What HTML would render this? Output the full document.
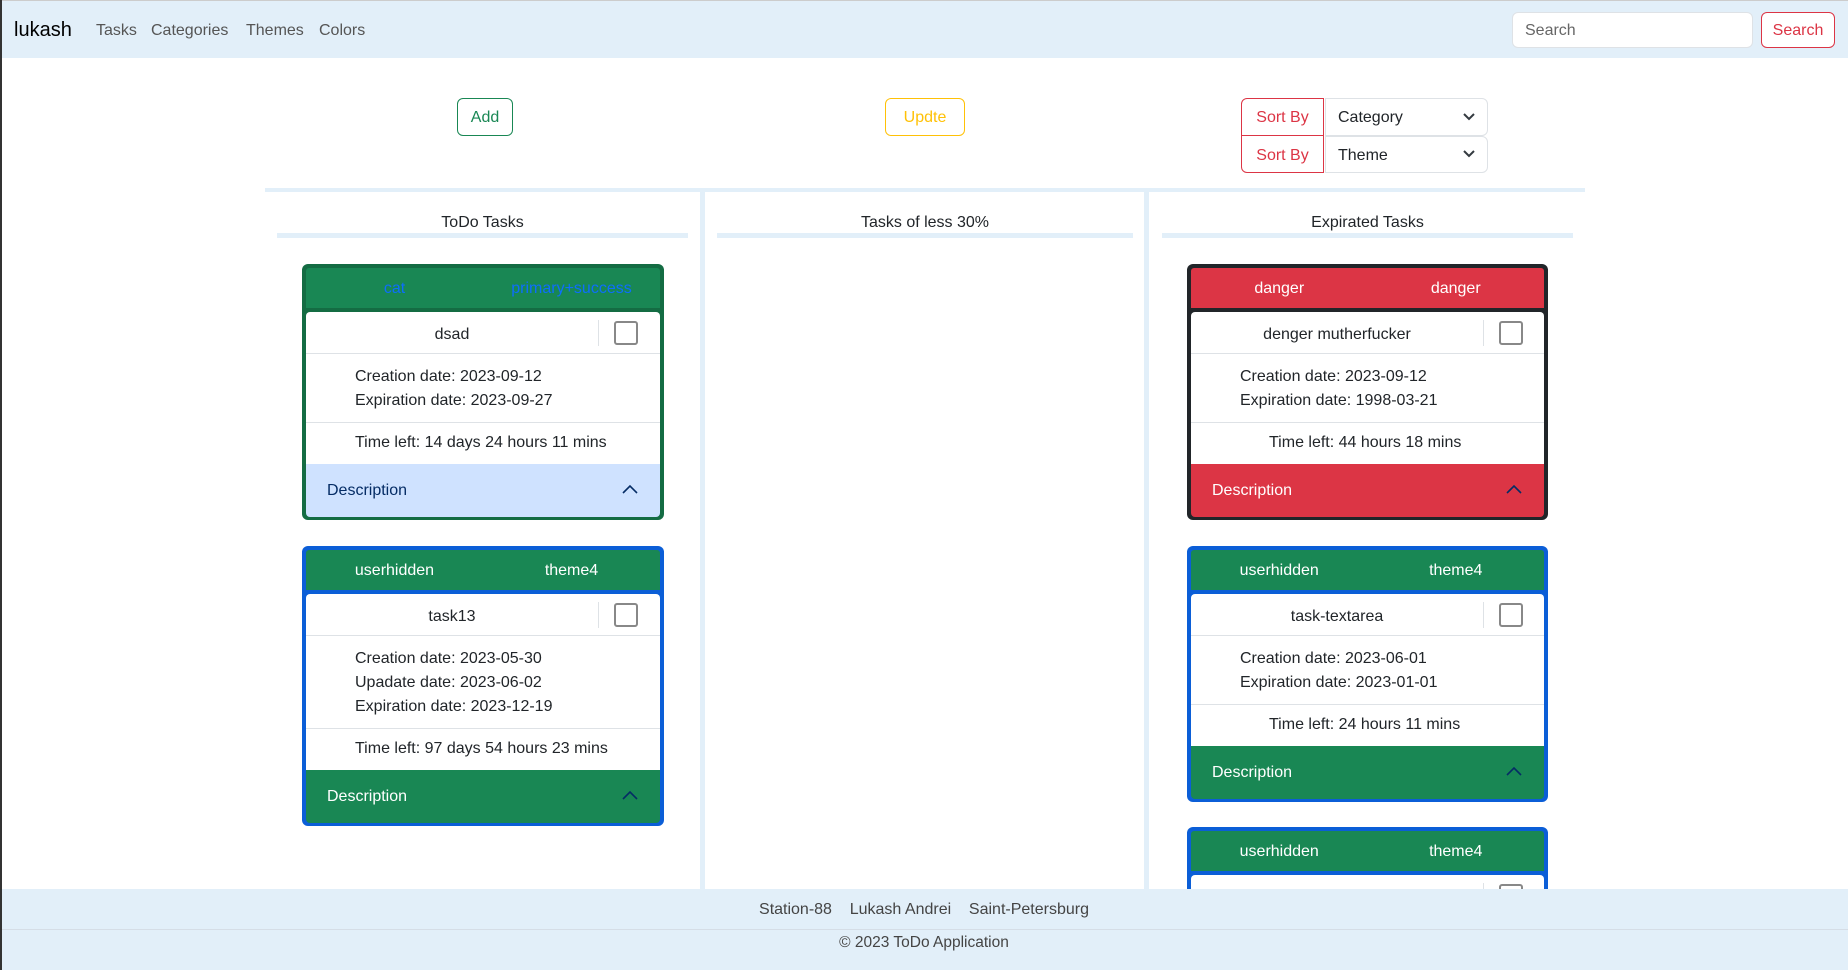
<!DOCTYPE html>
<html><head><meta charset="utf-8">
<style>
*{box-sizing:border-box;margin:0;padding:0}
body{width:1848px;height:970px;overflow:hidden;position:relative;background:#fff;font-family:"Liberation Sans","DejaVu Sans",sans-serif;font-size:16px;color:#212529}
.abs{position:absolute}
.nav{left:0;top:0;width:1848px;height:58px;background:#e2eff9;border-top:1px solid #ccc}
.leftbar{left:0;top:0;width:2px;height:970px;background:#333;z-index:5}
.brand{left:14px;top:19px;font-size:20px;color:#000}
.nl{top:22px;font-size:16px;color:#555}
.btn{border:1px solid;border-radius:6px;display:flex;align-items:center;justify-content:center;font-size:16px;background:#fff;padding-top:2px}
.hl{background:#e2eff9}
.ch{font-size:16px;text-align:center;top:214px}
.card{border-radius:6px;padding:4px}
.hdr{height:40px;display:flex;color:#fff;border-radius:3px 3px 0 0}
.hdr div{flex:1;text-align:center;line-height:42px}
.wh{background:#fff;margin-top:4px;border-radius:4px 4px 0 0}
.tr{height:42px;display:flex;align-items:center;border-bottom:1px solid #dee2e6;position:relative;padding-top:5px}
.tr .t{width:292px;text-align:center}
.tr .sep{position:absolute;left:292px;top:8px;width:1px;height:26px;background:#dee2e6}
.tr .cb{position:absolute;left:308px;top:9px;width:24px;height:24px;border:2px solid #888;border-radius:3px}
.dr{padding:11px 0 9px 49px;line-height:24px;border-bottom:1px solid #dee2e6}
.tl{height:41px;line-height:39px;padding-left:49px}
.desc{height:53px;display:flex;align-items:center;justify-content:space-between;padding:0 22px 0 21px;border-radius:0 0 4px 4px}
.desc svg{margin-top:-3px}
</style></head><body>
<div class="abs leftbar"></div>
<div class="abs nav"></div>
<div class="abs brand">lukash</div>
<div class="abs nl" style="left:96px">Tasks</div>
<div class="abs nl" style="left:151px">Categories</div>
<div class="abs nl" style="left:246px">Themes</div>
<div class="abs nl" style="left:319px">Colors</div>
<div class="abs" style="left:1512px;top:12px;width:241px;height:36px;border:1px solid #dee2e6;border-radius:6px;background:#fff;padding-left:12px;line-height:36px;color:#666">Search</div>
<div class="abs btn" style="left:1761px;top:12px;width:74px;height:36px;border-color:#dc3545;color:#dc3545">Search</div>

<div class="abs btn" style="left:457px;top:98px;width:56px;height:38px;border-color:#198754;color:#198754">Add</div>
<div class="abs btn" style="left:885px;top:98px;width:80px;height:38px;border-color:#ffc107;color:#ffc107">Updte</div>

<div class="abs" style="left:1241px;top:98px;width:83px;height:75px;border:1px solid #dc3545;border-radius:6px 0 0 6px"></div>
<div class="abs" style="left:1241px;top:135px;width:83px;height:1px;background:#dc3545"></div>
<div class="abs" style="left:1241px;top:109px;width:83px;text-align:center;color:#dc3545">Sort By</div>
<div class="abs" style="left:1241px;top:147px;width:83px;text-align:center;color:#dc3545">Sort By</div>
<div class="abs" style="left:1325px;top:98px;width:163px;height:38px;border:1px solid #dee2e6;border-radius:0 6px 6px 0;padding-left:12px;line-height:38px">Category<svg style="position:absolute;right:12px;top:14px" width="12" height="8" viewBox="0 0 12 8"><polyline points="1,1 6,6 11,1" fill="none" stroke="#343a40" stroke-width="2"/></svg></div>
<div class="abs" style="left:1325px;top:136px;width:163px;height:37px;border:1px solid #dee2e6;border-radius:0 6px 6px 0;padding-left:12px;line-height:37px">Theme<svg style="position:absolute;right:12px;top:13px" width="12" height="8" viewBox="0 0 12 8"><polyline points="1,1 6,6 11,1" fill="none" stroke="#343a40" stroke-width="2"/></svg></div>

<div class="abs hl" style="left:265px;top:188px;width:1320px;height:4px"></div>
<div class="abs hl" style="left:700px;top:192px;width:5px;height:700px"></div>
<div class="abs hl" style="left:1144px;top:192px;width:5px;height:700px"></div>
<div class="abs ch" style="left:277px;width:411px">ToDo Tasks</div>
<div class="abs ch" style="left:717px;width:416px">Tasks of less 30%</div>
<div class="abs ch" style="left:1162px;width:411px">Expirated Tasks</div>
<div class="abs hl" style="left:277px;top:233px;width:411px;height:5px"></div>
<div class="abs hl" style="left:717px;top:233px;width:416px;height:5px"></div>
<div class="abs hl" style="left:1162px;top:233px;width:411px;height:5px"></div>

<!-- card 1 -->
<div class="abs card" style="left:302px;top:264px;width:362px;height:256px;background:#146c43">
 <div class="hdr" style="background:#198754;color:#0d6efd"><div>cat</div><div>primary+success</div></div>
 <div class="wh">
  <div class="tr"><div class="t">dsad</div><div class="sep"></div><div class="cb"></div></div>
  <div class="dr">Creation date: 2023-09-12<br>Expiration date: 2023-09-27</div>
  <div class="tl">Time left: 14 days 24 hours 11 mins</div>
 </div>
 <div class="desc" style="background:#cfe2ff;color:#052c65">Description<svg width="16" height="10" viewBox="0 0 16 10"><polyline points="1,9 8,2 15,9" fill="none" stroke="#052c65" stroke-width="1.6"/></svg></div>
</div>
<!-- card 2 -->
<div class="abs card" style="left:302px;top:546px;width:362px;height:280px;background:#0b5ed7">
 <div class="hdr" style="background:#198754"><div>userhidden</div><div>theme4</div></div>
 <div class="wh">
  <div class="tr"><div class="t">task13</div><div class="sep"></div><div class="cb"></div></div>
  <div class="dr">Creation date: 2023-05-30<br>Upadate date: 2023-06-02<br>Expiration date: 2023-12-19</div>
  <div class="tl">Time left: 97 days 54 hours 23 mins</div>
 </div>
 <div class="desc" style="background:#198754;color:#fff">Description<svg width="16" height="10" viewBox="0 0 16 10"><polyline points="1,9 8,2 15,9" fill="none" stroke="#052c65" stroke-width="1.6"/></svg></div>
</div>
<!-- card 3 -->
<div class="abs card" style="left:1187px;top:264px;width:361px;height:256px;background:#212529">
 <div class="hdr" style="background:#dc3545"><div>danger</div><div>danger</div></div>
 <div class="wh">
  <div class="tr"><div class="t">denger mutherfucker</div><div class="sep"></div><div class="cb"></div></div>
  <div class="dr">Creation date: 2023-09-12<br>Expiration date: 1998-03-21</div>
  <div class="tl" style="padding-left:78px">Time left: 44 hours 18 mins</div>
 </div>
 <div class="desc" style="background:#dc3545;color:#fff">Description<svg width="16" height="10" viewBox="0 0 16 10"><polyline points="1,9 8,2 15,9" fill="none" stroke="#052c65" stroke-width="1.6"/></svg></div>
</div>
<!-- card 4 -->
<div class="abs card" style="left:1187px;top:546px;width:361px;height:256px;background:#0b5ed7">
 <div class="hdr" style="background:#198754"><div>userhidden</div><div>theme4</div></div>
 <div class="wh">
  <div class="tr"><div class="t">task-textarea</div><div class="sep"></div><div class="cb"></div></div>
  <div class="dr">Creation date: 2023-06-01<br>Expiration date: 2023-01-01</div>
  <div class="tl" style="padding-left:78px">Time left: 24 hours 11 mins</div>
 </div>
 <div class="desc" style="background:#198754;color:#fff">Description<svg width="16" height="10" viewBox="0 0 16 10"><polyline points="1,9 8,2 15,9" fill="none" stroke="#052c65" stroke-width="1.6"/></svg></div>
</div>
<!-- card 5 -->
<div class="abs card" style="left:1187px;top:827px;width:361px;height:120px;background:#0b5ed7">
 <div class="hdr" style="background:#198754"><div>userhidden</div><div>theme4</div></div>
 <div class="wh">
  <div class="tr"><div class="t"></div><div class="sep"></div><div class="cb"></div></div>
 </div>
</div>

<div class="abs" style="left:0;top:889px;width:1848px;height:81px;background:#e2eff9;z-index:3">
 <div class="abs" style="left:0;top:12px;width:1848px;text-align:center;color:#444">Station-88&nbsp;&nbsp;&nbsp; Lukash Andrei &nbsp;&nbsp;&nbsp;Saint-Petersburg</div>
 <div class="abs" style="left:0;top:40px;width:1848px;height:1px;background:#d5dde6"></div>
 <div class="abs" style="left:0;top:45px;width:1848px;text-align:center;color:#444;font-size:15.5px">© 2023 ToDo Application</div>
</div>
</body></html>
